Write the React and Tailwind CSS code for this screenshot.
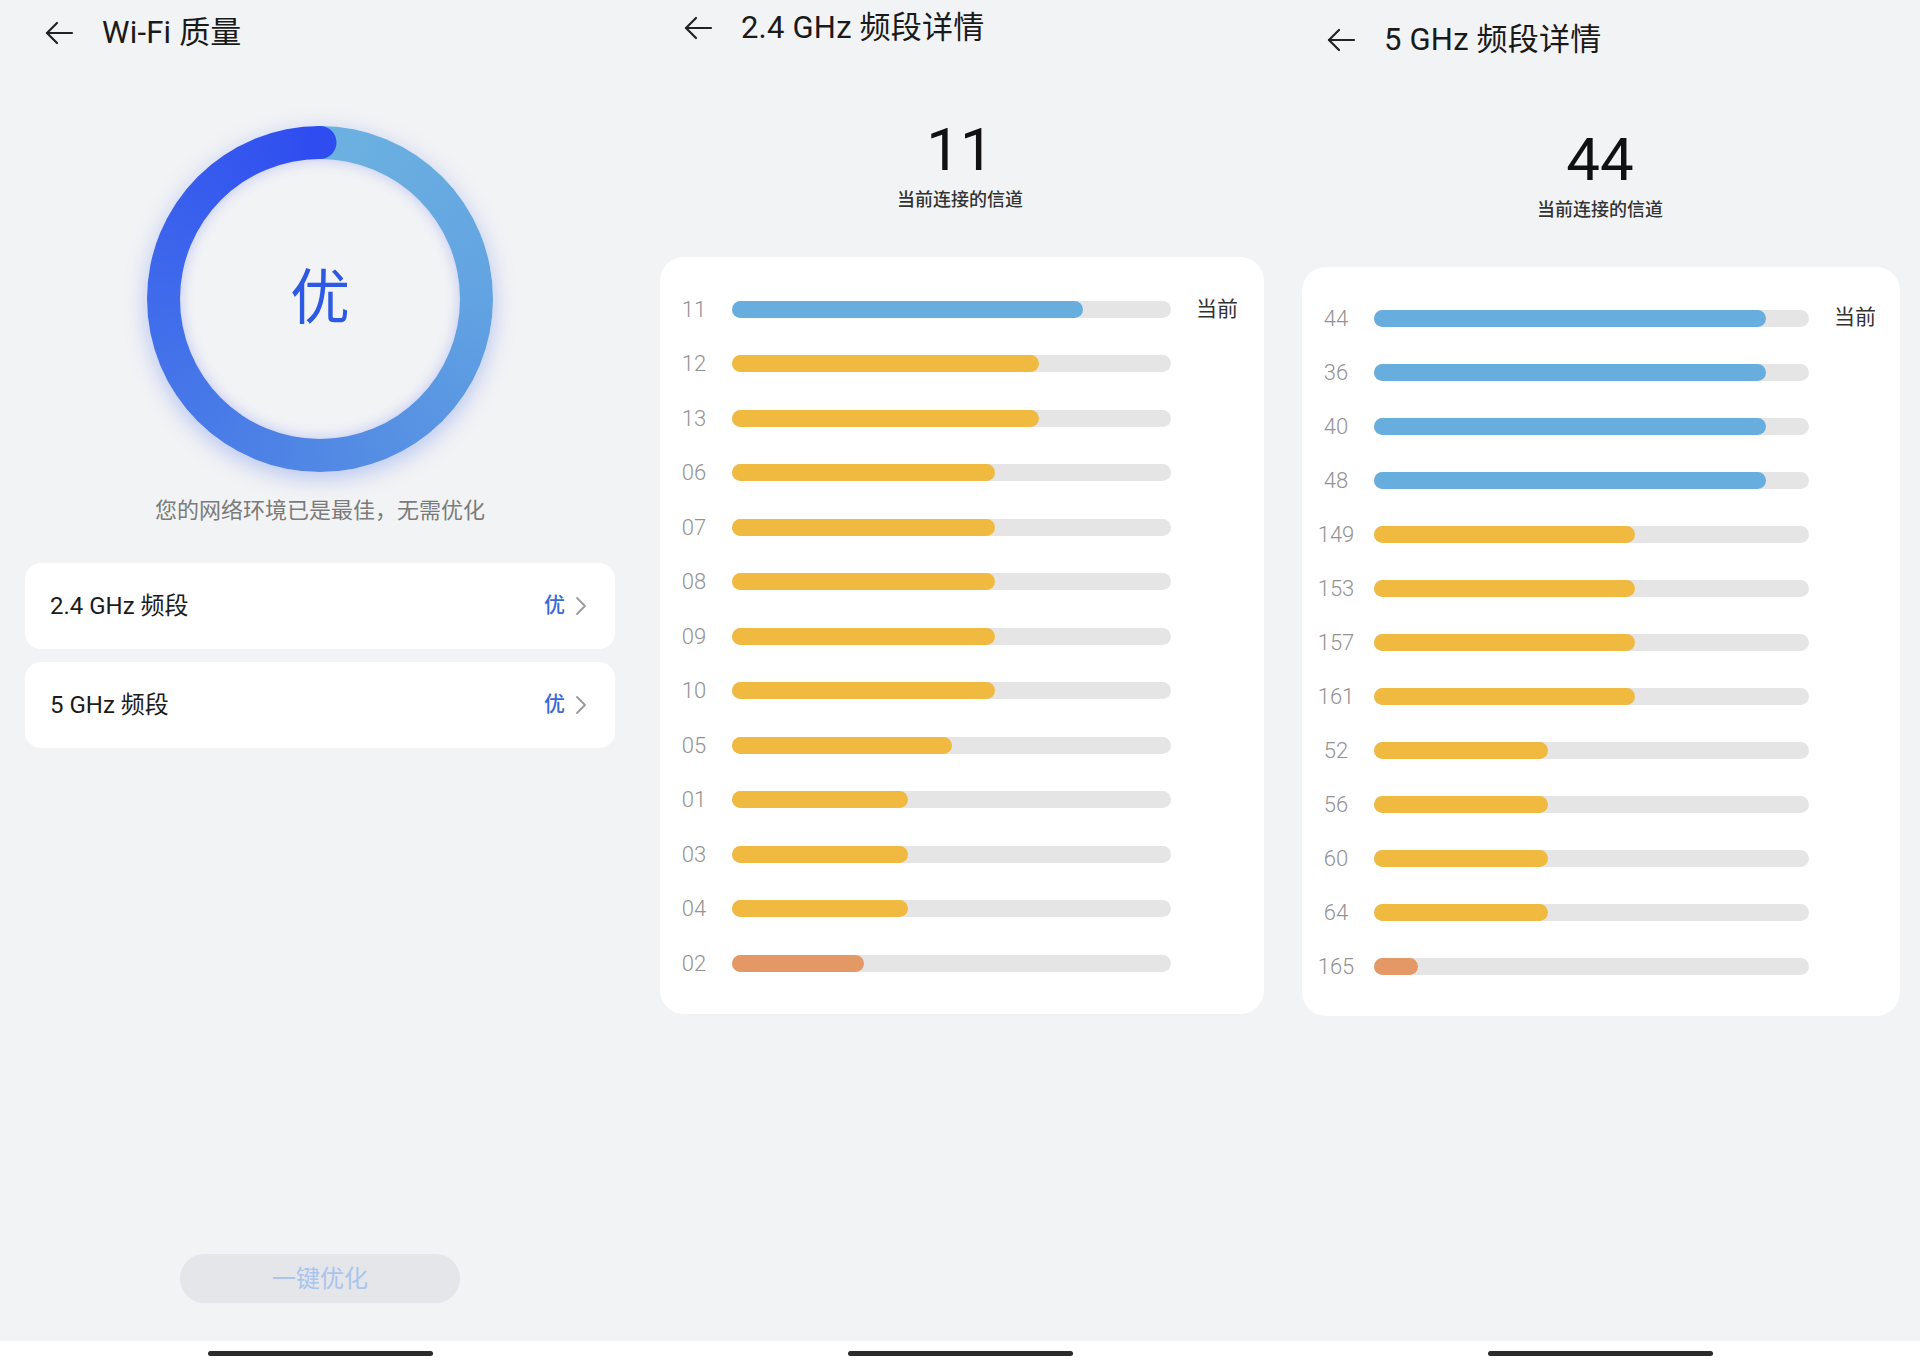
import React from 'react'

const FONT = "font-['Roboto','Noto_Sans_CJK_SC',sans-serif]"

const BAND24 = [
  { ch: '11', v: 0.8, c: 'blue', current: true },
  { ch: '12', v: 0.7, c: 'yellow' },
  { ch: '13', v: 0.7, c: 'yellow' },
  { ch: '06', v: 0.6, c: 'yellow' },
  { ch: '07', v: 0.6, c: 'yellow' },
  { ch: '08', v: 0.6, c: 'yellow' },
  { ch: '09', v: 0.6, c: 'yellow' },
  { ch: '10', v: 0.6, c: 'yellow' },
  { ch: '05', v: 0.5, c: 'yellow' },
  { ch: '01', v: 0.4, c: 'yellow' },
  { ch: '03', v: 0.4, c: 'yellow' },
  { ch: '04', v: 0.4, c: 'yellow' },
  { ch: '02', v: 0.3, c: 'orange' },
]

const BAND5 = [
  { ch: '44', v: 0.9, c: 'blue', current: true },
  { ch: '36', v: 0.9, c: 'blue' },
  { ch: '40', v: 0.9, c: 'blue' },
  { ch: '48', v: 0.9, c: 'blue' },
  { ch: '149', v: 0.6, c: 'yellow' },
  { ch: '153', v: 0.6, c: 'yellow' },
  { ch: '157', v: 0.6, c: 'yellow' },
  { ch: '161', v: 0.6, c: 'yellow' },
  { ch: '52', v: 0.4, c: 'yellow' },
  { ch: '56', v: 0.4, c: 'yellow' },
  { ch: '60', v: 0.4, c: 'yellow' },
  { ch: '64', v: 0.4, c: 'yellow' },
  { ch: '165', v: 0.1, c: 'orange' },
]

const FILL = {
  blue: 'bg-[#67addd]',
  yellow: 'bg-[#f0b940]',
  orange: 'bg-[#e49866]',
}

function BackArrow() {
  return (
    <svg width="30" height="26" viewBox="0 0 30 26" fill="none" stroke="#222" strokeWidth="2.2" strokeLinecap="round" strokeLinejoin="round">
      <path d="M28 13H3" />
      <path d="M13 3L3 13L13 23" />
    </svg>
  )
}

function Chevron() {
  return (
    <svg width="12" height="20" viewBox="0 0 12 20" fill="none" stroke="#9a9a9a" strokeWidth="1.8" strokeLinecap="round" strokeLinejoin="round">
      <path d="M2 2L10 10L2 18" />
    </svg>
  )
}

function Header({ title, h, arrowLeft }) {
  return (
    <div className={`flex items-center ${h} ${arrowLeft}`}>
      <BackArrow />
      <span className="ml-[28px] text-[31px] text-[#1a1a1a] font-normal tracking-[0.2px]">{title}</span>
    </div>
  )
}

function BandRow({ label }) {
  return (
    <div className="flex items-center justify-between h-[86px] rounded-[16px] bg-white pl-[25px] pr-[28px]">
      <span className="text-[24px] text-[#1c1c1c]">{label}</span>
      <div className="flex items-center gap-[10px]">
        <span className="text-[21px] text-[#3a6ad8] font-medium">优</span>
        <Chevron />
      </div>
    </div>
  )
}

function ChannelCard({ rows, rowH, trackW, pt, pb, curGap, extra }) {
  return (
    <div className={`bg-white rounded-[24px] ${pt} ${pb} ${extra}`}>
      {rows.map((r) => (
        <div key={r.ch} className={`flex items-center ${rowH}`}>
          <span className="ml-[12px] w-[44px] text-center text-[22px] font-light text-[#939393]">{r.ch}</span>
          <div className={`ml-[16px] h-[17px] rounded-full bg-[#e5e5e5] ${trackW}`}>
            <div className={`h-full rounded-full ${FILL[r.c]}`} style={{ width: `${r.v * 100}%` }} />
          </div>
          {r.current && <span className={`${curGap} text-[21px] text-[#333]`}>当前</span>}
        </div>
      ))}
    </div>
  )
}

function QualityPanel() {
  return (
    <div className="flex flex-col">
      <Header title="Wi-Fi 质量" h="h-[66px]" arrowLeft="pl-[44px]" />
      <div className="mt-[60px] flex justify-center">
        <div className="relative w-[346px] h-[346px] rounded-full bg-[conic-gradient(from_0deg,#6cb2e0_0deg,#62a3e2_90deg,#5188e4_180deg,#3f6beb_270deg,#2f4cf0_360deg)] shadow-[0_6px_22px_rgba(70,110,235,0.35)] flex items-center justify-center">
          <div className="w-[280px] h-[280px] rounded-full bg-[#f2f3f5] shadow-[inset_0_0_14px_rgba(60,90,240,0.3)] flex items-center justify-center">
            <span className="text-[60px] text-[#2d5ae4] leading-none">优</span>
          </div>
          <div className="absolute top-0 left-1/2 -translate-x-1/2 w-[33px] h-[33px] rounded-full bg-[#2f4cf0]" />
        </div>
      </div>
      <div className="mt-[22px] text-center text-[22px] text-[#7b7b7b]">您的网络环境已是最佳，无需优化</div>
      <div className="mt-[36px] mx-[25px] flex flex-col gap-[13px]">
        <BandRow label="2.4 GHz 频段" />
        <BandRow label="5 GHz 频段" />
      </div>
      <div className="mt-auto mb-[38px] flex justify-center">
        <div className="w-[280px] h-[49px] rounded-full bg-[#e5e6e9] flex items-center justify-center text-[24px] text-[#a9c4ee]">
          一键优化
        </div>
      </div>
    </div>
  )
}

function DetailPanel({ title, channel, rows, variant }) {
  const five = variant === '5'
  return (
    <div className="flex flex-col">
      <Header
        title={title}
        h={five ? 'h-[80px]' : 'h-[56px]'}
        arrowLeft={five ? 'pl-[46px]' : 'pl-[43px]'}
      />
      <div className={`flex flex-col items-center ${five ? 'mt-[43px]' : 'mt-[57px]'}`}>
        <span className="text-[60px] leading-[74px] text-[#111]">{channel}</span>
        <span className="mt-[-1px] text-[18px] font-medium text-[#333]">当前连接的信道</span>
      </div>
      {five ? (
        <ChannelCard
          rows={rows}
          rowH="h-[54px]"
          trackW="w-[435px]"
          pt="pt-[24px]"
          pb="pb-[23px]"
          curGap="ml-[25px]"
          extra="mt-[44px] ml-[22px] mr-[20px]"
        />
      ) : (
        <ChannelCard
          rows={rows}
          rowH="h-[54.5px]"
          trackW="w-[439px]"
          pt="pt-[25px]"
          pb="pb-[23px]"
          curGap="ml-[25px]"
          extra="mt-[44px] ml-[20px] mr-[16px]"
        />
      )}
    </div>
  )
}

export default function App() {
  return (
    <div className={`w-[1920px] h-[1366px] bg-[#f2f3f5] flex flex-col overflow-hidden ${FONT}`}>
      <div className="grid grid-cols-3 flex-1">
        <QualityPanel />
        <DetailPanel title="2.4 GHz 频段详情" channel="11" rows={BAND24} variant="24" />
        <DetailPanel title="5 GHz 频段详情" channel="44" rows={BAND5} variant="5" />
      </div>
      <div className="grid grid-cols-3 h-[25px] bg-white">
        {[0, 1, 2].map((i) => (
          <div key={i} className="flex justify-center pt-[10px]">
            <div className="w-[225px] h-[5px] rounded-full bg-[#2b2b2b]" />
          </div>
        ))}
      </div>
    </div>
  )
}
